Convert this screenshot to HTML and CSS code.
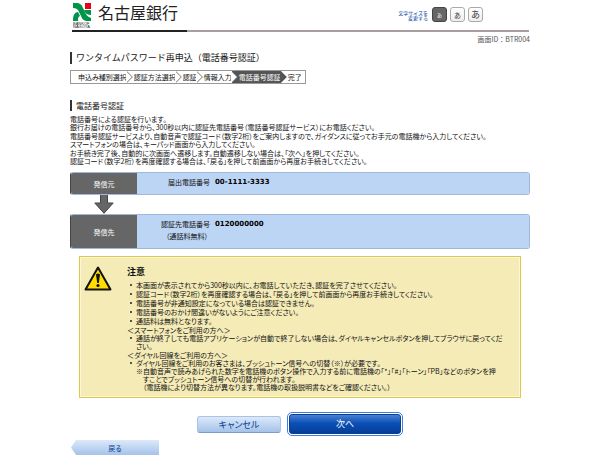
FILE: index.html
```html
<!DOCTYPE html>
<html lang="ja">
<head>
<meta charset="utf-8">
<title>名古屋銀行</title>
<link rel="stylesheet" href="styles.css">
</head>
<body>
<header class="header">
  <a class="brand" href="#">
    <span class="brand-mark">
      <svg viewBox="0 0 18 18" width="18" height="18" aria-hidden="true">
        <path fill="#00944a" d="M0 0h3c4 0 6 2 7 5l2 4c1 3 3 5 6 6v3h-3c-4 0-6-2-7-5L6 9C5 6 3 5 0 5z"/>
        <path fill="#00944a" d="M0 17c0-5 2-8 5-8l2 4c-2 1-2 2-2 5H0zM11 7h7v5c-3 0-5-1-6-3z"/>
        <path fill="#e60020" d="M12 0h6v6h-6z"/>
      </svg>
      <span class="brand-roman">BANKOF<br>NAGOYA</span>
    </span>
    <span class="brand-name">名古屋銀行</span>
  </a>
  <div class="sizer">
    <span class="sizer-label">文字サイズを<br>変更する</span>
    <button class="size size-s" type="button">あ</button>
    <button class="size size-m" type="button">あ</button>
    <button class="size size-l" type="button">あ</button>
  </div>
</header>
<main class="main">
  <p class="screen-id">画面ID：BTR004</p>
  <h1 class="title">ワンタイムパスワード再申込（電話番号認証）</h1>
  <ol class="steps">
    <li class="step">申込み種別選択</li>
    <li class="step">認証方法選択</li>
    <li class="step">認証</li>
    <li class="step">情報入力</li>
    <li class="step current">電話番号認証</li>
    <li class="step">完了</li>
  </ol>
  <h2 class="subtitle">電話番号認証</h2>
  <div class="intro">
    <p>電話番号による認証を行います。<br>銀行お届けの電話番号から、300秒以内に認証先電話番号（電話番号認証サービス）にお電話ください。</p>
    <p>電話番号認証サービスより、自動音声で認証コード（数字2桁）をご案内しますので、ガイダンスに従ってお手元の電話機から入力してください。<br>スマートフォンの場合は、キーパッド画面から入力してください。</p>
    <p>お手続き完了後、自動的に次画面へ遷移します。自動遷移しない場合は、「次へ」を押してください。<br>認証コード（数字2桁）を再度確認する場合は、「戻る」を押して前画面から再度お手続きしてください。</p>
  </div>
  <section class="call">
    <h3 class="call-head">発信元</h3>
    <dl class="call-body">
      <dt>届出電話番号</dt>
      <dd>00-1111-3333</dd>
    </dl>
  </section>
  <svg class="arrow" viewBox="0 0 20 19" width="20" height="19" aria-hidden="true"><path fill="#666" stroke="#444" d="M6.500-1V8H.8L10 18.300 19.200 8H13.500V-1"/></svg>
  <section class="call">
    <h3 class="call-head">発信先</h3>
    <dl class="call-body">
      <dt>認証先電話番号<span class="free">（通話料無料）</span></dt>
      <dd>0120000000</dd>
    </dl>
  </section>
  <section class="notice">
    <svg class="warn" viewBox="0 0 28 25" width="28" height="25" aria-hidden="true">
      <path d="M14 1.500 26.500 23.500H1.500z" fill="#fd0" stroke="#111" stroke-width="2" stroke-linejoin="round"/>
      <path d="M12 8.500q2-2 4 0L14.800 17h-1.600z" fill="#111"/><circle cx="14" cy="19.500" r="1.600" fill="#111"/>
    </svg>
    <div class="notice-body">
      <h3 class="notice-title">注意</h3>
      <ul>
        <li>本画面が表示されてから300秒以内に、お電話していただき、認証を完了させてください。</li>
        <li>認証コード（数字2桁）を再度確認する場合は、「戻る」を押して前画面から再度お手続きしてください。</li>
        <li>電話番号が非通知設定になっている場合は認証できません。</li>
        <li>電話番号のおかけ間違いがないようにご注意ください。</li>
        <li>通話料は無料となります。</li>
      </ul>
      <h4>＜スマートフォンをご利用の方へ＞</h4>
      <ul>
        <li>通話が終了しても電話アプリケーションが自動で終了しない場合は、ダイヤルキャンセルボタンを押してブラウザに戻ってください。</li>
      </ul>
      <h4>＜ダイヤル回線をご利用の方へ＞</h4>
      <ul>
        <li>ダイヤル回線をご利用のお客さまは、プッシュトーン信号への切替（※）が必要です。
          <p class="note">※自動音声で読みあげられた数字を電話機のボタン操作で入力する前に電話機の「*」「#」「トーン」「PB」などのボタンを押すことでプッシュトーン信号への切替が行われます。<br>（電話機により切替方法が異なります。電話機の取扱説明書などをご確認ください。）</p>
        </li>
      </ul>
    </div>
  </section>
  <div class="actions">
    <button class="btn cancel" type="button">キャンセル</button>
    <button class="btn next" type="button">次へ</button>
  </div>
  <button class="back" type="button">戻る</button>
</main>
</body>
</html>
```

FILE: styles.css
```css
* { box-sizing: border-box; margin: 0; padding: 0; }
body {
  padding: 0 70px;
  background: #fff;
  color: #111;
  font: 7px/8px "Noto Sans CJK JP", sans-serif;
  font-feature-settings: "palt";
}
h1, h2, h3, h4 { font-weight: 400; }
ul, ol { list-style: none; }
button { font: inherit; }

.header {
  display: flex;
  justify-content: space-between;
  align-items: flex-start;
  height: 32px;
  margin: 0 1px 0 2px;
  border-bottom: 2px solid;
  border-image: linear-gradient(90deg, #222 115px, #a99f9f 115px) 1;
}
.brand { display: flex; gap: 7px; padding: 3px 0 0 1px; color: #222; text-decoration: none; }
.brand-mark { display: flex; flex-direction: column; width: 18px; }
.brand-roman { margin-top: 1px; font: 4px/3px "Liberation Sans", sans-serif; }
.brand-name { font-size: 16px; line-height: 18px; font-feature-settings: normal; }
.sizer { display: flex; gap: 3px; padding: 7px 46px 0 0; }
.sizer-label { padding: 3px 1px 0 0; color: #0039a0; font-size: 5px; line-height: 5px; text-align: right; font-feature-settings: normal; }
.size {
  width: 15px; height: 15px;
  border: 1px solid #aaa; border-radius: 3px;
  background: linear-gradient(#fff, #eee);
  color: #333; line-height: 12px; text-align: center;
}
.size-s { background: #666; border-color: #444; color: #fff; font-size: 5px; }
.size-m { font-size: 7px; }
.size-l { font-size: 9px; }

.screen-id { margin-top: 2px; color: #555; line-height: 11px; text-align: right; font-feature-settings: normal; }
.title { margin-top: 7px; padding-left: 4px; border-left: 2px solid #333; font-size: 9px; line-height: 12px; font-feature-settings: normal; }
.steps { display: flex; width: max-content; height: 14px; margin-top: 6px; border: 1px solid #999; line-height: 12px; }
.step { position: relative; padding-left: 7px; }
.step::before, .step::after {
  content: ""; position: absolute; top: 0; left: 100%; z-index: 1;
  width: 6px; height: 12px; background: #777;
  clip-path: polygon(0 0, 100% 50%, 0 100%);
}
.step::after { margin-left: -1px; background: #fff; }
.step:last-child { padding-right: 3px; }
.step:last-child::before, .step:last-child::after { display: none; }
.current { background: #555; color: #fff; }
.current::before, .current::after { background: #555; }

.subtitle { margin-top: 16px; padding-left: 4px; border-left: 2px solid #333; font-size: 8px; line-height: 11px; }
.intro { display: grid; gap: 1px; margin-top: 4px; }

.call { display: flex; margin-top: 7px; border: 1px solid #9fb9dc; border-left-color: #444; border-radius: 3px; overflow: hidden; }
.call-head { display: flex; justify-content: center; align-items: center; width: 66px; background: #666; color: #fff; font-size: 7px; }
.call-body { flex: 1; display: flex; gap: 5px; padding: 5px 0 8px; background: #bcd5f4; }
.call-body dt { width: 73px; text-align: right; }
.call-body dd { color: #000; font: bold 7px/8px "DejaVu Sans", sans-serif; }
.free { display: block; margin-top: 4px; padding-right: 2px; }
.arrow { display: block; margin-left: 24px; }
.arrow + .call { margin-top: 0; }

.notice { display: flex; gap: 15px; margin: 7px 9px 0; padding: 8px 14px 5px 4px; background: #f4ebb7; border: 1px solid #dbc84c; box-shadow: inset 0 0 0 1px #fbf6d8; }
.warn { flex: none; margin-top: 1px; }
.notice-title { margin-bottom: 2px; font-size: 9px; line-height: 14px; font-weight: 700; }
.notice li { position: relative; padding-left: 9px; margin-bottom: 1px; }
.notice li::before { content: ""; position: absolute; left: 3px; top: 3px; width: 2px; height: 2px; border-radius: 1px; background: #222; }
.notice h4 { font-size: 7px; }
.note { padding: 0 7px; text-indent: -7px; }

.actions { display: flex; justify-content: center; align-items: center; gap: 8px; margin: 16px 2px 0 0; }
.btn { border-radius: 3px; font-size: 9px; line-height: 16px; }
.cancel { width: 84px; height: 17px; border: 1px solid #a9c3e6; border-bottom-color: #7c9cc8; background: linear-gradient(#dce9fa, #a5c2e9); color: #003d8f; }
.next { width: 112px; height: 20px; border: 1px solid #0c3f92; background: linear-gradient(#4a80d0, #0a50b8 45%, #073d94); color: #fff; outline: 1px solid #3a80e8; outline-offset: 1px; }
.back { display: block; width: 88px; height: 15px; margin: 6px 0 0 1px; border: 0; background: linear-gradient(#dce9fa, #a5c2e9); color: #003d8f; clip-path: polygon(0 50%, 5px 0, 100% 0, 100% 100%, 5px 100%); }
```
